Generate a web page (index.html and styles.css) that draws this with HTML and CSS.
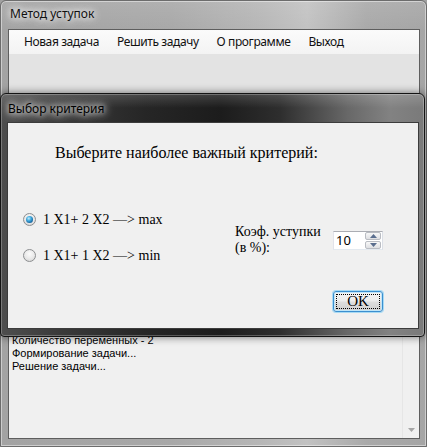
FILE: index.html
```html
<!DOCTYPE html>
<html lang="ru">
<head>
<meta charset="utf-8">
<title>Метод уступок</title>
<link rel="stylesheet" href="styles.css">
</head>
<body>
<div class="desktop">
  <div class="main-window">
    <div class="main-title"><span class="glow-text">Метод уступок</span></div>
    <div class="main-client">
      <nav class="menu">
        <span class="menu-item">Новая задача</span>
        <span class="menu-item">Решить задачу</span>
        <span class="menu-item">О программе</span>
        <span class="menu-item">Выход</span>
      </nav>
      <div class="panel"></div>
      <div class="log">
        <div class="log-text">
          <div>Количество переменных - 2</div>
          <div>Формирование задачи...</div>
          <div>Решение задачи...</div>
        </div>
        <div class="scrollbar">
          <svg class="scroll-arrow" width="7" height="4" viewBox="0 0 7 4"><path d="M0 0H7L3.5 4Z" fill="#a6a6a6"/></svg>
        </div>
      </div>
    </div>
  </div>

  <div class="dialog">
    <div class="dialog-title"><span class="glow-text">Выбор критерия</span></div>
    <div class="dialog-client">
      <p class="prompt">Выберите наиболее важный критерий:</p>
      <div class="dialog-body">
        <div class="options">
          <label class="radio checked"><span class="radio-mark"></span>1 X1+ 2 X2 —&gt; max</label>
          <label class="radio"><span class="radio-mark"></span>1 X1+ 1 X2 —&gt; min</label>
        </div>
        <div class="coef">
          <div class="coef-label">Коэф. уступки<br>(в %):</div>
          <div class="spin">
            <span class="spin-value">10</span>
            <span class="spin-buttons">
              <span class="spin-btn"><svg width="7" height="4" viewBox="0 0 7 4"><path d="M3.5 0L7 4H0Z" fill="#5a6e8e"/></svg></span>
              <span class="spin-btn"><svg width="7" height="4" viewBox="0 0 7 4"><path d="M0 0H7L3.5 4Z" fill="#5a6e8e"/></svg></span>
            </span>
          </div>
        </div>
      </div>
      <div class="actions">
        <button class="ok" type="button">OK</button>
      </div>
    </div>
  </div>
</div>
</body>
</html>
```
FILE: styles.css
```css
html, body {
  margin: 0;
  padding: 0;
}

body {
  background: #a0a0a0;
}

.desktop {
  position: relative;
  width: 427px;
  height: 447px;
  overflow: hidden;
  background: #a0a0a0;
}

/* ---------- main window ---------- */
.main-window {
  box-sizing: border-box;
  width: 427px;
  height: 447px;
  display: flex;
  flex-direction: column;
  padding: 0 6px 7px 7px;
  border: 1px solid #6c6c6c;
  border-radius: 6px 6px 0 0;
  background:
    linear-gradient(180deg, rgba(255,255,255,0.10), rgba(255,255,255,0) 30px),
    linear-gradient(90deg, #a3a3a3 0%, #a8a8a8 40%, #b7b7b7 62%, #c2c2c2 72%, #a9a9a9 86%, #a5a5a5 100%);
  box-shadow: inset 0 0 0 1px rgba(255,255,255,0.45);
}

.main-title {
  height: 28px;
  box-sizing: border-box;
  padding: 5px 0 0 2px;
  font: 12px/16px "Noto Sans", "DejaVu Sans", sans-serif;
  color: #111;
}

.glow-text {
  text-shadow: 0 0 6px #fff, 0 0 10px rgba(255,255,255,0.85), 0 0 14px rgba(255,255,255,0.6);
}

.main-client {
  flex: 1;
  display: flex;
  flex-direction: column;
  border: 1px solid #5e5e5e;
  background: #e3e3e3;
}

.menu {
  height: 24px;
  display: flex;
  align-items: center;
  gap: 18px;
  padding-left: 15px;
  background: linear-gradient(180deg, #fbfbfb, #f3f3f3);
  font: 12px/16px "Noto Sans", "DejaVu Sans", sans-serif;
  color: #111;
  letter-spacing: -0.4px;
}

.panel {
  flex: 1;
  background: #e3e3e3;
}

.log {
  height: 140px;
  display: flex;
  border-top: 1px solid #828790;
  background: #f0f0f0;
}

.log-text {
  flex: 1;
  padding: 36px 0 0 3px;
  font: 11px/13px "Liberation Sans", Arial, sans-serif;
  color: #000;
}

.scrollbar {
  width: 16px;
  border-left: 1px solid #e6e6e6;
  display: flex;
  flex-direction: column;
  justify-content: flex-end;
  align-items: center;
  padding-bottom: 6px;
}

/* ---------- dialog ---------- */
.dialog {
  position: absolute;
  left: 0;
  top: 93px;
  width: 425px;
  height: 244px;
  box-sizing: border-box;
  display: flex;
  flex-direction: column;
  padding: 0 5px 7px 6px;
  border: 1px solid #141414;
  border-radius: 6px 6px 4px 4px;
  background:
    linear-gradient(180deg, rgba(255,255,255,0.16), rgba(255,255,255,0) 14px),
    linear-gradient(90deg, #4e4e4e 0%, #3a3a3a 14%, #262626 34%, #1c1c1c 52%, #2e2e2e 66%, #686868 82%, #828282 92%, #7a7a7a 100%);
  box-shadow: 0 0 8px rgba(0,0,0,0.55), inset 0 0 0 1px rgba(255,255,255,0.25);
}

.dialog-title {
  height: 28px;
  box-sizing: border-box;
  padding: 7px 0 0 1px;
  font: 12px/16px "Noto Sans", "DejaVu Sans", sans-serif;
  color: #000;
}

.dialog-client {
  flex: 1;
  display: flex;
  flex-direction: column;
  border: 1px solid #3c3c3c;
  background: #f0f0f0;
  padding-top: 21px;
  font-family: "Liberation Serif", "Times New Roman", serif;
  color: #000;
}

.prompt {
  margin: 0 0 0 47px;
  font-size: 16px;
  line-height: 18px;
}

.dialog-body {
  display: flex;
  margin-top: 51px;
  height: 49px;
}

.options {
  width: 227px;
  box-sizing: border-box;
  padding-left: 15px;
  display: flex;
  flex-direction: column;
  gap: 23px;
}

.radio {
  display: flex;
  align-items: center;
  gap: 7px;
  height: 13px;
  font-size: 14px;
  line-height: 14px;
  white-space: nowrap;
}

.radio-mark {
  position: relative;
  flex: none;
  width: 13px;
  height: 13px;
  box-sizing: border-box;
  border-radius: 50%;
  border: 1px solid #8c8e90;
  background: radial-gradient(circle at 50% 35%, #fbfbfb 0%, #e8e8e8 55%, #cfcfcf 100%);
}

.radio.checked .radio-mark::after {
  content: "";
  position: absolute;
  left: 2px;
  top: 2px;
  width: 7px;
  height: 7px;
  border-radius: 50%;
  background: radial-gradient(circle at 40% 35%, #c4ecfc 0%, #46aee0 35%, #10609c 75%, #0a3d6a 100%);
}

.coef {
  display: flex;
  align-items: flex-start;
  margin-top: 11px;
}

.coef-label {
  width: 98px;
  font-size: 14px;
  line-height: 16px;
}

.spin {
  margin-top: 7px;
  display: flex;
  width: 50px;
  height: 19px;
  box-sizing: border-box;
  border: 1px solid #abadb3;
  border-color: #abadb3 #dbdfe6 #e3e9ef #e2e3ea;
  background: #fff;
}

.spin-value {
  flex: 1;
  padding-left: 2px;
  font: 13px/17px "Noto Sans", "DejaVu Sans", sans-serif;
  color: #000;
}

.spin-buttons {
  width: 16px;
  display: flex;
  flex-direction: column;
  gap: 1px;
  padding: 0 1px 0 0;
}

.spin-btn {
  flex: 1;
  display: flex;
  align-items: center;
  justify-content: center;
  border: 1px solid #b9bcc2;
  border-radius: 2px;
  background: linear-gradient(180deg, #f8f8f8, #dedfe2);
}

.actions {
  display: flex;
  justify-content: flex-end;
  margin-top: 29px;
  padding-right: 35px;
}

.ok {
  position: relative;
  width: 50px;
  height: 21px;
  box-sizing: border-box;
  padding: 0;
  border: 1px solid #3b8fd0;
  border-radius: 3px;
  background: linear-gradient(180deg, #f4f4f4 0%, #ececec 48%, #dedede 52%, #cfcfcf 100%);
  box-shadow: 0 0 0 1px rgba(110,200,245,0.55), inset 0 0 0 1px #bfe5f8;
  font: 15px/19px "Liberation Serif", "Times New Roman", serif;
  color: #000;
}

.ok::after {
  content: "";
  position: absolute;
  left: 2px;
  top: 2px;
  right: 2px;
  bottom: 2px;
  border: 1px dotted #000;
}
```
